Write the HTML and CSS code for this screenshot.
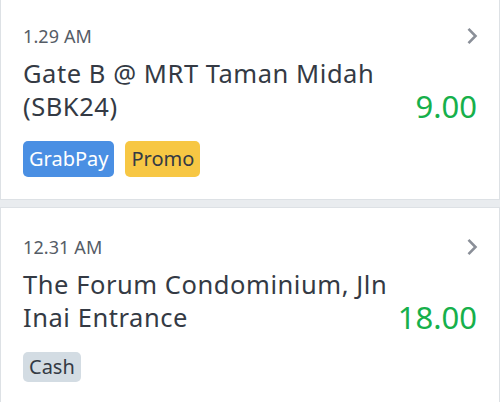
FILE: index.html
```html
<!DOCTYPE html>
<html>
<head>
<meta charset="utf-8">
<link rel="stylesheet" href="styles.css">
</head>
<body>
<div class="list">
  <div class="card">
    <div class="head">
      <span class="time">1.29 AM</span>
      <svg class="chev" width="14" height="18" viewBox="0 0 14 18"><path d="M3.5 1.8 L10.5 9 L3.5 16.2" fill="none" stroke="#8a8f98" stroke-width="2.6"/></svg>
    </div>
    <div class="body">
      <div class="title">Gate B @ MRT Taman Midah (SBK24)</div>
      <div class="price">9.00</div>
    </div>
    <div class="badges">
      <span class="badge blue">GrabPay</span>
      <span class="badge yellow">Promo</span>
    </div>
  </div>
  <div class="card">
    <div class="head">
      <span class="time">12.31 AM</span>
      <svg class="chev" width="14" height="18" viewBox="0 0 14 18"><path d="M3.5 1.8 L10.5 9 L3.5 16.2" fill="none" stroke="#8a8f98" stroke-width="2.6"/></svg>
    </div>
    <div class="body">
      <div class="title">The Forum Condominium, Jln Inai Entrance</div>
      <div class="price">18.00</div>
    </div>
    <div class="badges">
      <span class="badge gray">Cash</span>
    </div>
  </div>
</div>
</body>
</html>
```

FILE: styles.css
```css
html, body {
  margin: 0;
  padding: 0;
  background: #e9ecef;
  font-family: "Noto Sans", "Open Sans", sans-serif;
  color: #343a44;
}
.list {
  display: flex;
  flex-direction: column;
  gap: 7px;
  margin-top: -4px;
}
.card {
  background: #fff;
  border: 1px solid #dde1e5;
  padding: 27px 20px 22px 22px;
}
.head {
  display: flex;
  justify-content: space-between;
  align-items: center;
  height: 24px;
}
.time {
  font-size: 18px;
  line-height: 24px;
  color: #555c66;
  letter-spacing: 0.1px;
}
.chev {
  display: block;
}
.body {
  display: flex;
  align-items: flex-end;
  justify-content: space-between;
  margin-top: 9px;
  padding-right: 2px;
}
.title {
  font-size: 25.5px;
  line-height: 33px;
  letter-spacing: 0.55px;
  color: #343a44;
  max-width: 400px;
}
.price {
  font-size: 31px;
  line-height: 33px;
  color: #16b04b;
  flex-shrink: 0;
}
.badges {
  display: flex;
  gap: 11px;
  margin-top: 18px;
}
.badge {
  font-size: 20px;
  line-height: 26px;
  padding: 5px 6px;
  border-radius: 5px;
}
.blue { background: #4a8fe3; color: #fff; }
.yellow { background: #f7c744; color: #343a44; }
.gray { background: #d3dce3; color: #343a44; padding: 2px 6px; }
```
